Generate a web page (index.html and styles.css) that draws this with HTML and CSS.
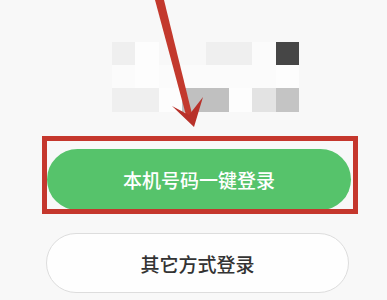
FILE: index.html
```html
<!DOCTYPE html>
<html lang="zh">
<head>
<meta charset="utf-8">
<link rel="stylesheet" href="styles.css">
</head>
<body>
<div class="page">
  <div class="mosaic">
    <i class="c1"></i><i class="c0"></i><i></i><i></i><i class="c1"></i><i class="c1"></i><i class="cw"></i><i class="dk"></i>
    <i class="cw"></i><i class="c0"></i><i class="cw"></i><i class="cw"></i><i class="cw"></i><i class="cw"></i><i class="cw"></i><i class="c0"></i>
    <i class="c1"></i><i class="c1"></i><i class="c0"></i><i class="g1"></i><i class="g1"></i><i class="c0"></i><i class="c2"></i><i class="g2"></i>
  </div>
  <div class="frame">
    <button class="btn primary">本机号码一键登录</button>
  </div>
  <button class="btn secondary">其它方式登录</button>
</div>
<svg class="arrow" width="387" height="140" viewBox="0 0 387 140">
  <polygon points="155,0 164,0 193,118 187,119" fill="#c3392d"/>
  <polygon points="194,127 172,106 189,115 203,97" fill="#b8312a"/>
</svg>
</body>
</html>
```
FILE: styles.css
```css
html, body {
  margin: 0;
  padding: 0;
  background: #f8f8f8;
}
body {
  width: 387px;
  height: 300px;
  overflow: hidden;
  position: relative;
  font-family: "Noto Sans CJK SC", "Noto Sans", sans-serif;
}
.page {
  display: flex;
  flex-direction: column;
  padding-top: 42px;
}
.mosaic {
  margin-left: 112px;
  display: grid;
  grid-template-columns: repeat(8, 23.4px);
  grid-template-rows: 23px 23px 24px;
  filter: blur(0.7px);
}
.mosaic i { display: block; }
.mosaic .c0 { background: #fdfdfd; }
.mosaic .c1 { background: #efefef; }
.mosaic .c2 { background: #e3e3e3; }
.mosaic .cw { background: #fbfbfb; }
.mosaic .dk { background: #464646; }
.mosaic .g1 { background: #c0c0c0; }
.mosaic .g2 { background: #c4c4c4; }
.frame {
  margin: 24px 0 0 42px;
  width: 316px;
  height: 78px;
  box-sizing: border-box;
  border: 5px solid #c5372d;
  padding: 8px 2px 0 0;
  overflow: hidden;
}
.btn {
  font-family: "Noto Sans CJK SC", "Noto Sans", sans-serif;
  font-size: 19px;
  font-weight: 500;
  display: flex;
  align-items: center;
  justify-content: center;
  padding: 0;
  margin: 0;
}
.primary {
  width: 304px;
  height: 61px;
  border: none;
  border-radius: 31px;
  background: #56c36b;
  color: #ffffff;
}
.secondary {
  margin: 19px 0 0 46px;
  width: 303px;
  height: 60px;
  border: 1px solid #dddddd;
  border-radius: 30px;
  background: #fefefe;
  color: #333333;
}
.arrow {
  position: absolute;
  left: 0;
  top: 0;
}
```
